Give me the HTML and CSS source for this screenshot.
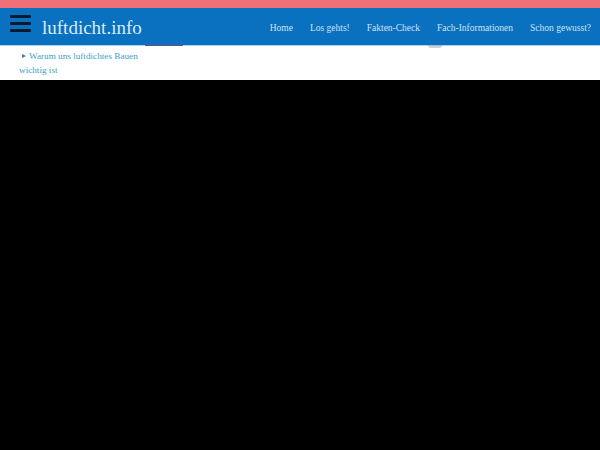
FILE: index.html
```
<!DOCTYPE html>
<html>
<head>
<meta charset="utf-8">
<link rel="stylesheet" href="styles.css">
</head>
<body>
<div class="topstrip"></div>
<header class="bar">
  <div class="burger"><span></span><span></span><span></span></div>
  <a class="logo">luftdicht.info</a>
  <nav class="nav">
    <a>Home</a>
    <a>Los gehts!</a>
    <a>Fakten-Check</a>
    <a>Fach-Informationen</a>
    <a>Schon gewusst?</a>
  </nav>
  <div class="mark1"></div>
  <div class="mark2"></div>
</header>
<div class="sub">
  <a class="sublink">Warum uns luftdichtes Bauen wichtig ist</a>
</div>
<main class="dark"></main>
</body>
</html>
```
FILE: styles.css
```
html, body { margin: 0; padding: 0; }
body { background: #000; font-family: "Liberation Serif", "DejaVu Serif", serif; width: 600px; height: 450px; overflow: hidden; }
.topstrip { height: 8px; background: #f07078; }
.bar { position: relative; height: 37px; background: #0a70c0; border-bottom: 1px solid #a8d4ee; display: flex; align-items: center; }
.burger { width: 21px; margin-left: 10px; display: flex; flex-direction: column; gap: 4px; margin-top: -7px; }
.burger span { display: block; height: 3px; background: #0b1a2c; border-radius: 1px; }
.logo { margin-left: 11px; font-size: 19px; color: #d9ecf8; margin-top: 2px; }
.nav { margin-left: auto; margin-right: 9px; display: flex; gap: 17px; margin-top: 3px; }
.nav a { font-size: 9.5px; color: #cde3f2; }
.mark1 { position: absolute; left: 145px; bottom: -1px; width: 38px; height: 1px; background: #6c4f80; }
.mark2 { position: absolute; left: 428px; bottom: -3px; width: 14px; height: 3px; border-radius: 0 0 7px 7px; background: #8fa6b8; opacity: 0.5; }
.sub { background: #fff; height: 34px; padding: 3px 0 0 19px; box-sizing: border-box; }
.sublink { display: block; width: 122px; font-size: 9.2px; line-height: 14px; color: #3c9fc9; text-indent: 3px; }
.sublink::before { content: ""; display: inline-block; width: 0; height: 0; border-style: solid; border-width: 2.5px 0 2.5px 4px; border-color: transparent transparent transparent #2f7fb0; margin-right: 3px; vertical-align: 1px; }
.dark { background: #000; height: 370px; }
```
